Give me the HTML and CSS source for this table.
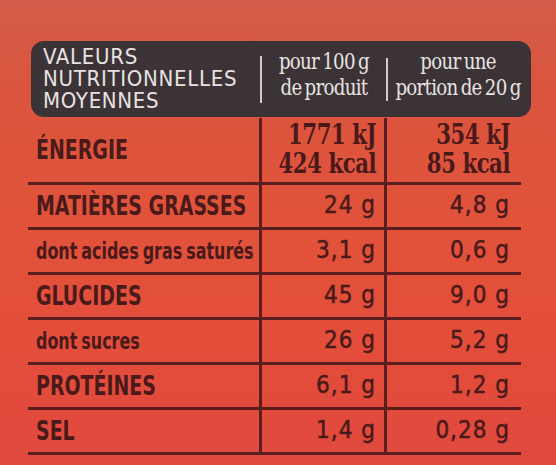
FILE: index.html
```html
<!DOCTYPE html>
<html lang="fr">
  <head>
    <meta charset="UTF-8" />
    <meta name="viewport" content="width=device-width, initial-scale=1.0" />
    <title>Valeurs nutritionnelles</title>
    <link rel="stylesheet" href="styles.css">
  </head>
  <body>
    <div class="label">
      <!-- Dark header band -->
      <div class="head">
        <div class="head-title">VALEURS<br>NUTRITIONNELLES<br>MOYENNES</div>
        <div class="sep"></div>
        <div class="head-col col1"><span>pour 100 g<br>de produit</span></div>
        <div class="sep sep2"></div>
        <div class="head-col col2"><span>pour une<br>portion de 20 g</span></div>
      </div>

      <!-- Nutrition rows -->
      <div class="table">
        <div class="row energy">
          <div class="name"><span>ÉNERGIE</span></div>
          <div class="val v1"><span>1771 kJ<br>424 kcal</span></div>
          <div class="val v2"><span>354 kJ<br>85 kcal</span></div>
        </div>
        <div class="row">
          <div class="name"><span>MATIÈRES GRASSES</span></div>
          <div class="val v1"><span>24 g</span></div>
          <div class="val v2"><span>4,8 g</span></div>
        </div>
        <div class="row">
          <div class="name sub"><span>dont acides gras saturés</span></div>
          <div class="val v1"><span>3,1 g</span></div>
          <div class="val v2"><span>0,6 g</span></div>
        </div>
        <div class="row">
          <div class="name"><span>GLUCIDES</span></div>
          <div class="val v1"><span>45 g</span></div>
          <div class="val v2"><span>9,0 g</span></div>
        </div>
        <div class="row">
          <div class="name sub"><span>dont sucres</span></div>
          <div class="val v1"><span>26 g</span></div>
          <div class="val v2"><span>5,2 g</span></div>
        </div>
        <div class="row">
          <div class="name"><span>PROTÉINES</span></div>
          <div class="val v1"><span>6,1 g</span></div>
          <div class="val v2"><span>1,2 g</span></div>
        </div>
        <div class="row">
          <div class="name"><span>SEL</span></div>
          <div class="val v1"><span>1,4 g</span></div>
          <div class="val v2"><span>0,28 g</span></div>
        </div>
      </div>
    </div>
  </body>
</html>
```

FILE: styles.css
```css
/* Global */
* {
  margin: 0;
  padding: 0;
  box-sizing: border-box;
}

body {
  width: 556px;
  height: 465px;
  overflow: hidden;
  background: linear-gradient(180deg, #d35d49 0%, #da553e 18%, #e2523a 50%, #e34c3a 80%, #e0493e 100%);
  font-family: "DejaVu Sans Condensed", "DejaVu Sans", sans-serif;
  color: #4a1a1b;
}

.label {
  padding: 41px 0 0 28px;
}

/* Header */
.head {
  width: 500px;
  height: 76px;
  margin-left: 3px;
  background: #3b3336;
  border-radius: 13px;
  display: flex;
  align-items: center;
  color: #e8e3e2;
}

.head-title {
  width: 229px;
  padding-left: 12px;
  font-size: 22px;
  line-height: 22px;
  letter-spacing: 0.7px;
}

.sep {
  width: 2px;
  height: 47px;
  background: #d2cccb;
}

.sep2 {
  height: 43px;
}

.head-col {
  font-family: "DejaVu Serif Condensed", "DejaVu Serif", serif;
  font-size: 22px;
  line-height: 26px;
  letter-spacing: -0.8px;
  word-spacing: -2px;
  text-align: center;
  padding-bottom: 9px;
  white-space: nowrap;
}

.head-col span {
  display: inline-block;
  transform: scaleX(0.92);
}

.col1 {
  width: 124px;
}

.col2 {
  flex: 1;
  padding-right: 2px;
}

/* Table */
.table {
  width: 493px;
  margin-top: 1px;
}

.row {
  display: grid;
  grid-template-columns: 231px 125px 137px;
  height: 45px;
  border-bottom: 3px solid #5a1e1e;
}

.row.energy {
  height: 67px;
}

.name {
  display: flex;
  align-items: center;
  padding-left: 8px;
  font-weight: bold;
  font-size: 26px;
  white-space: nowrap;
}

.name span {
  display: inline-block;
  transform: scaleX(0.81);
  transform-origin: left center;
}

.name.sub {
  font-size: 23px;
  word-spacing: -2px;
}

.name.sub span {
  transform: scaleX(0.77);
}

.val {
  display: flex;
  align-items: center;
  justify-content: flex-end;
  text-align: right;
  border-left: 3px solid #5a1e1e;
  font-size: 24px;
  letter-spacing: 1px;
  white-space: nowrap;
  padding-bottom: 2px;
  -webkit-text-stroke: 0.5px #4a1a1b;
}

.val span {
  display: inline-block;
  transform-origin: right center;
}

.energy .val {
  font-family: "DejaVu Serif Condensed", "DejaVu Serif", serif;
  font-weight: bold;
  font-size: 28px;
  line-height: 29px;
  letter-spacing: -0.5px;
  -webkit-text-stroke: 0;
}

.energy .val span {
  transform: scaleX(0.84);
}

.v1 {
  padding-right: 8px;
}

.v2 {
  padding-right: 11px;
}
```
